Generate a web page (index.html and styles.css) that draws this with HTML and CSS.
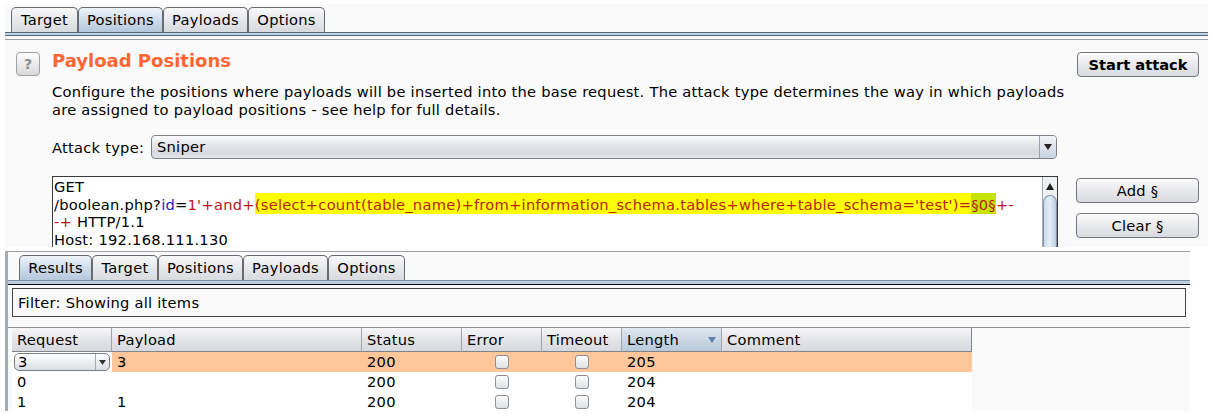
FILE: index.html
```html
<!DOCTYPE html>
<html>
<head>
<meta charset="utf-8">
<link rel="stylesheet" href="styles.css">
</head>
<body>
<div class="win-top">
  <div class="tabs tabs-top">
    <div class="tab w67">Target</div>
    <div class="tab sel w85">Positions</div>
    <div class="tab w85">Payloads</div>
    <div class="tab w77">Options</div>
  </div>
  <div class="tabline"></div>
  <div class="sepline"></div>
  <div class="panel">
    <div class="head">
      <div class="help">?</div>
      <div class="title">Payload Positions</div>
      <button class="btn start">Start attack</button>
    </div>
    <p class="desc">Configure the positions where payloads will be inserted into the base request. The attack type determines the way in which payloads are assigned to payload positions - see help for full details.</p>
    <div class="atk">
      <span class="lbl">Attack type:</span>
      <div class="select">
        <span class="sel-text">Sniper</span>
        <span class="sel-arrow"><svg width="8" height="6" viewBox="0 0 8 6"><path d="M0 0H8L4 6Z" fill="#222"/></svg></span>
      </div>
    </div>
    <div class="editor-row">
      <div class="editor">
        <div class="code">
          <div class="ln">GET</div>
          <div class="ln">/boolean.php?<span class="k">id</span>=<span class="v">1'+and+</span><span class="hl">(select+count(table_name)+from+information_schema.tables+where+table_schema='test')=</span><span class="mk">§0§</span><span class="v">+-</span></div>
          <div class="ln"><span class="v">-+</span> HTTP/1.1</div>
          <div class="ln">Host: 192.168.111.130</div>
        </div>
        <div class="vscroll">
          <div class="up"><svg width="8" height="7" viewBox="0 0 8 7"><path d="M0 7H8L4 0Z" fill="#222"/></svg></div>
          <div class="thumb"></div>
        </div>
      </div>
      <div class="side">
        <button class="btn add">Add §</button>
        <button class="btn clear">Clear §</button>
      </div>
    </div>
  </div>
</div>

<div class="win-bot">
  <div class="tabs tabs-bot">
    <div class="tab sel w73">Results</div>
    <div class="tab w66">Target</div>
    <div class="tab w85">Positions</div>
    <div class="tab w85">Payloads</div>
    <div class="tab w77">Options</div>
  </div>
  <div class="tabline2"></div>
  <div class="filter">Filter: Showing all items</div>
  <div class="scroll">
    <div class="table">
      <div class="hc">Request</div>
      <div class="hc">Payload</div>
      <div class="hc">Status</div>
      <div class="hc">Error</div>
      <div class="hc">Timeout</div>
      <div class="hc sorted"><span>Length</span><svg width="8" height="6" viewBox="0 0 8 6"><path d="M0 0H8L4 6Z" fill="#5b82ab"/></svg></div>
      <div class="hc last">Comment</div>

      <div class="c reqcell"><div class="combo"><span class="combo-v">3</span><span class="combo-a"><svg width="7" height="5" viewBox="0 0 7 5"><path d="M0 0H7L3.5 5Z" fill="#333"/></svg></span></div></div>
      <div class="c o">3</div>
      <div class="c o">200</div>
      <div class="c o cb"><span class="box"></span></div>
      <div class="c o cb"><span class="box"></span></div>
      <div class="c o">205</div>
      <div class="c o"></div>

      <div class="c">0</div>
      <div class="c"></div>
      <div class="c">200</div>
      <div class="c cb"><span class="box"></span></div>
      <div class="c cb"><span class="box"></span></div>
      <div class="c">204</div>
      <div class="c"></div>

      <div class="c">1</div>
      <div class="c">1</div>
      <div class="c">200</div>
      <div class="c cb"><span class="box"></span></div>
      <div class="c cb"><span class="box"></span></div>
      <div class="c">204</div>
      <div class="c"></div>
    </div>
  </div>
</div>
</body>
</html>
```

FILE: styles.css
```css
* { box-sizing: border-box; margin: 0; padding: 0; }
body {
  margin: 0;
  background: #fff;
  font-family: "DejaVu Sans", "Liberation Sans", sans-serif;
  font-size: 14.67px;
  letter-spacing: 0.25px;
  color: #000;
  width: 1213px;
  height: 416px;
  overflow: hidden;
}

/* ---------- tabs ---------- */
.tabs { display: flex; }
.tabs-top { height: 28px; padding: 3px 0 0 6px; }
.tabs-bot { height: 28px; padding: 3px 0 0 11px; }
.tab {
  height: 25px;
  border: 1px solid #676c73;
  border-bottom: none;
  border-radius: 5px 5px 0 0;
  background: linear-gradient(#f8f8f9, #e6e7ea 55%, #d9dade);
  line-height: 20px;
  padding-top: 2px;
  text-align: center;
  white-space: nowrap;
}
.tab.sel { background: linear-gradient(#eef3f8, #cfdcea 50%, #b4c8dc); }
.w66 { width: 66px; }
.w67 { width: 67px; }
.w73 { width: 73px; }
.w77 { width: 77px; }
.w85 { width: 85px; }

.tabline {
  height: 4px;
  border-top: 1px solid #56687a;
  border-bottom: 1px solid #56687a;
  background: #bcd0e5;
}
.sepline { margin-top: 3px; height: 1px; background: #9c9ca8; }

/* ---------- top window ---------- */
.win-top {
  margin: 4px 0 0 5px;
  width: 1203px;
  height: 243px;
  background: #fafafa;
  overflow: hidden;
}
.panel { padding: 10px 9px 0 11px; }
.head { display: flex; align-items: flex-start; height: 27px; }
.help {
  width: 24px;
  height: 24px;
  margin-top: 2px;
  border: 1px solid #9da0a4;
  border-radius: 4px;
  background: linear-gradient(#fdfdfd, #d9d9db);
  color: #8a8a8a;
  font-weight: bold;
  font-size: 14px;
  line-height: 22px;
  letter-spacing: 0;
  text-align: center;
}
.title {
  margin-left: 12px;
  color: #ff6633;
  font-weight: bold;
  font-size: 18px;
  line-height: 22px;
  letter-spacing: 0;
}
.btn {
  font-family: inherit;
  font-size: 14.67px;
  letter-spacing: 0.25px;
  color: #000;
  border: 1px solid #72777e;
  border-radius: 4px;
  background: linear-gradient(#fcfcfc, #e8e9ec 50%, #d8dadf);
  text-align: center;
  line-height: 20px;
  padding: 0;
}
.start { margin-left: auto; margin-top: 2px; width: 122px; height: 25px; font-weight: bold; letter-spacing: 0; }

.desc { margin: 6px 0 0 36px; width: 1030px; line-height: 18px; }

.atk { margin: 16px 0 0 36px; display: flex; align-items: center; height: 24px; }
.lbl { width: 99px; }
.select {
  width: 906px;
  height: 24px;
  border: 1px solid #7d828a;
  border-radius: 4px;
  background: linear-gradient(#fbfbfc 0%, #e7e9ed 35%, #d6dae1 75%, #e1e4e9 100%);
  display: flex;
  align-items: center;
}
.sel-text { flex: 1; padding-left: 5px; line-height: 22px; }
.sel-arrow {
  width: 17px;
  height: 22px;
  border-left: 1px solid #9ba1aa;
  display: flex;
  align-items: center;
  justify-content: center;
  background: linear-gradient(#f2f4f7, #c9d3df);
  border-radius: 0 3px 3px 0;
}

.editor-row { margin: 17px 0 0 36px; display: flex; gap: 18px; }
.editor {
  width: 1006px;
  height: 71px;
  border: 1px solid #3a3a3a;
  border-bottom: none;
  background: #fff;
  display: flex;
  overflow: hidden;
}
.code { flex: 1; padding: 1px 0 0 1px; line-height: 17.7px; }
.ln { white-space: pre; }
.k { color: #1a1ad6; }
.v { color: #c0101a; }
.hl { color: #b8231a; background: #ffff00; padding: 3px 0 1px; }
.mk { color: #b8231a; background: #c4e400; padding: 3px 0 1px; }
.vscroll {
  width: 15px;
  border-left: 1px solid #a6a9ae;
  background: #eef0f2;
  display: flex;
  flex-direction: column;
}
.up { height: 17px; display: flex; align-items: center; justify-content: center; padding-top: 2px; }
.thumb {
  flex: 1;
  margin-top: 1px;
  border: 1px solid #7f94ab;
  border-bottom: none;
  border-radius: 7px 7px 0 0;
  background: linear-gradient(90deg, #c9daea, #e6eff7 50%, #b8cde0);
}
.side { width: 123px; padding-top: 2px; display: flex; flex-direction: column; gap: 10px; }
.add { height: 25px; }
.clear { height: 25px; }

/* ---------- bottom window ---------- */
.win-bot {
  margin: 4px 0 0 5px;
  width: 1185px;
  height: 160px;
  border-left: 3px solid #a7aaaf;
  border-top: 1px solid #9ea2a8;
  background: #fafafa;
  overflow: hidden;
}
.tabline2 {
  height: 5px;
  border-top: 1px solid #7b8ea3;
  border-bottom: 1px solid #000;
  background: #bdd0e3;
}
.filter {
  margin: 3px 0 0 4px;
  width: 1174px;
  height: 29px;
  border: 1px solid #444;
  padding-left: 5px;
  line-height: 27px;
}
.scroll { margin-top: 10px; border-top: 1px solid #8f9399; padding-left: 4px; }
.table {
  width: 960px;
  display: grid;
  grid-template-columns: 100px 250px 100px 80px 80px 100px 250px;
  grid-template-rows: 24px 20px 20px 20px;
  background: #fff;
}
.hc {
  border-right: 1px solid #a2a6ac;
  border-bottom: 1px solid #80848a;
  background: linear-gradient(#f6f6f8, #e4e5e9 50%, #d7d9de);
  padding-left: 5px;
  line-height: 23px;
  white-space: nowrap;
}
.hc.last { border-right: 1px solid #80848a; }
.hc.sorted {
  background: linear-gradient(#e1e8f0, #cad7e4 50%, #b9cadb);
  display: flex;
  align-items: center;
  justify-content: space-between;
  padding-right: 5px;
}
.c { line-height: 20px; padding-left: 5px; white-space: nowrap; }
.o { background: #ffc699; }
.reqcell { padding: 1px 2px 0 2px; }
.combo {
  height: 18px;
  border: 1px solid #7a7f86;
  border-radius: 5px;
  background: linear-gradient(#ffffff, #e9ebee 60%, #dadde2);
  display: flex;
  align-items: center;
}
.combo-v { flex: 1; padding-left: 3px; line-height: 16px; }
.combo-a {
  width: 14px;
  height: 16px;
  border-left: 1px solid #a4a9b0;
  display: flex;
  align-items: center;
  justify-content: center;
}
.cb { display: flex; align-items: center; justify-content: center; padding-left: 0; }
.box {
  width: 14px;
  height: 14px;
  border: 1px solid #8b8f95;
  border-radius: 3px;
  background: linear-gradient(#fdfdfd, #dfe1e4);
}
```
